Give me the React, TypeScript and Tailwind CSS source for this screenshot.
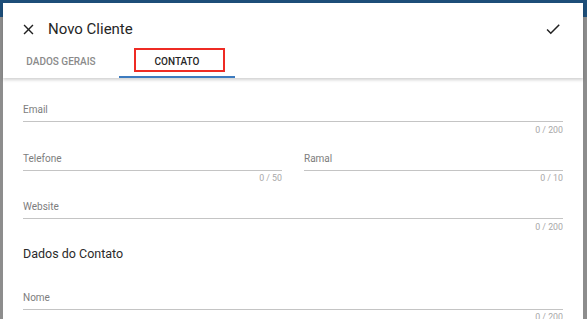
import React from "react";

function CloseIcon() {
  return (
    <svg width="17" height="17" viewBox="0 0 24 24" fill="#212121">
      <path d="M19 6.41L17.59 5 12 10.59 6.41 5 5 6.41 10.59 12 5 17.59 6.41 19 12 13.41 17.59 19 19 17.59 13.41 12z" />
    </svg>
  );
}

function CheckIcon() {
  return (
    <svg width="18" height="18" viewBox="0 0 24 24" fill="#212121">
      <path d="M9 16.17L4.83 12l-1.42 1.41L9 19 21 7l-1.41-1.41z" />
    </svg>
  );
}

function Field({ label, max }: { label: string; max: number }) {
  return (
    <div className="flex flex-col">
      <span className="text-[10px] leading-[12px] text-[#7d7d7d]">{label}</span>
      <div className="mt-[5px] h-px bg-[#c4c4c4]" />
      <span className="mt-[2.5px] self-end text-[8.8px] leading-[11px] text-[#a8a8a8]">
        0 / {max}
      </span>
    </div>
  );
}

export default function App() {
  return (
    <div
      className="relative h-[319px] w-[587px] overflow-hidden bg-[#8d8d8d]"
      style={{ fontFamily: "Roboto, 'Liberation Sans', sans-serif" }}
    >
      <div className="h-[17px] bg-[#1d4e79]" />

      <div className="absolute left-[3px] top-[3px] flex h-[330px] w-[580px] flex-col rounded-t-[3px] bg-white">
        {/* header */}
        <div className="relative z-10 flex flex-col bg-white pt-[8px] shadow-[0_2px_3px_rgba(0,0,0,0.18)]">
          <div className="flex h-[36px] items-center pl-[17px] pr-[21px]">
            <CloseIcon />
            <span className="ml-[11px] text-[15px] leading-[18px] text-[#262626]">Novo Cliente</span>
            <div className="ml-auto">
              <CheckIcon />
            </div>
          </div>
          <div className="flex h-[31px]">
            <div className="flex w-[116px] flex-col">
              <div className="flex h-[29px] items-center justify-center pb-[1px] text-[10px] font-medium text-[#8a8a8a]">
                DADOS GERAIS
              </div>
              <div className="h-[2px]" />
            </div>
            <div className="relative flex w-[116px] flex-col">
              <div className="flex h-[29px] items-center justify-center pb-[1px] text-[10px] font-medium text-[#262626]">
                CONTATO
              </div>
              <div className="h-[2px] bg-[#3c7bbf]" />
              <div className="absolute left-[15px] top-[1px] h-[24px] w-[91px] border-2 border-[#ee2b24]" />
            </div>
          </div>
        </div>

        {/* content */}
        <div className="flex flex-col px-[20px] pt-[26px]">
          <Field label="Email" max={200} />
          <div className="mt-[17px] grid grid-cols-2 gap-x-[22px]">
            <Field label="Telefone" max={50} />
            <Field label="Ramal" max={10} />
          </div>
          <div className="mt-[17px]">
            <Field label="Website" max={200} />
          </div>
          <h2 className="mt-[13.5px] text-[12.5px] leading-[16px] text-[#2b2b2b]">Dados do Contato</h2>
          <div className="mt-[29.5px]">
            <Field label="Nome" max={200} />
          </div>
        </div>
      </div>
    </div>
  );
}
